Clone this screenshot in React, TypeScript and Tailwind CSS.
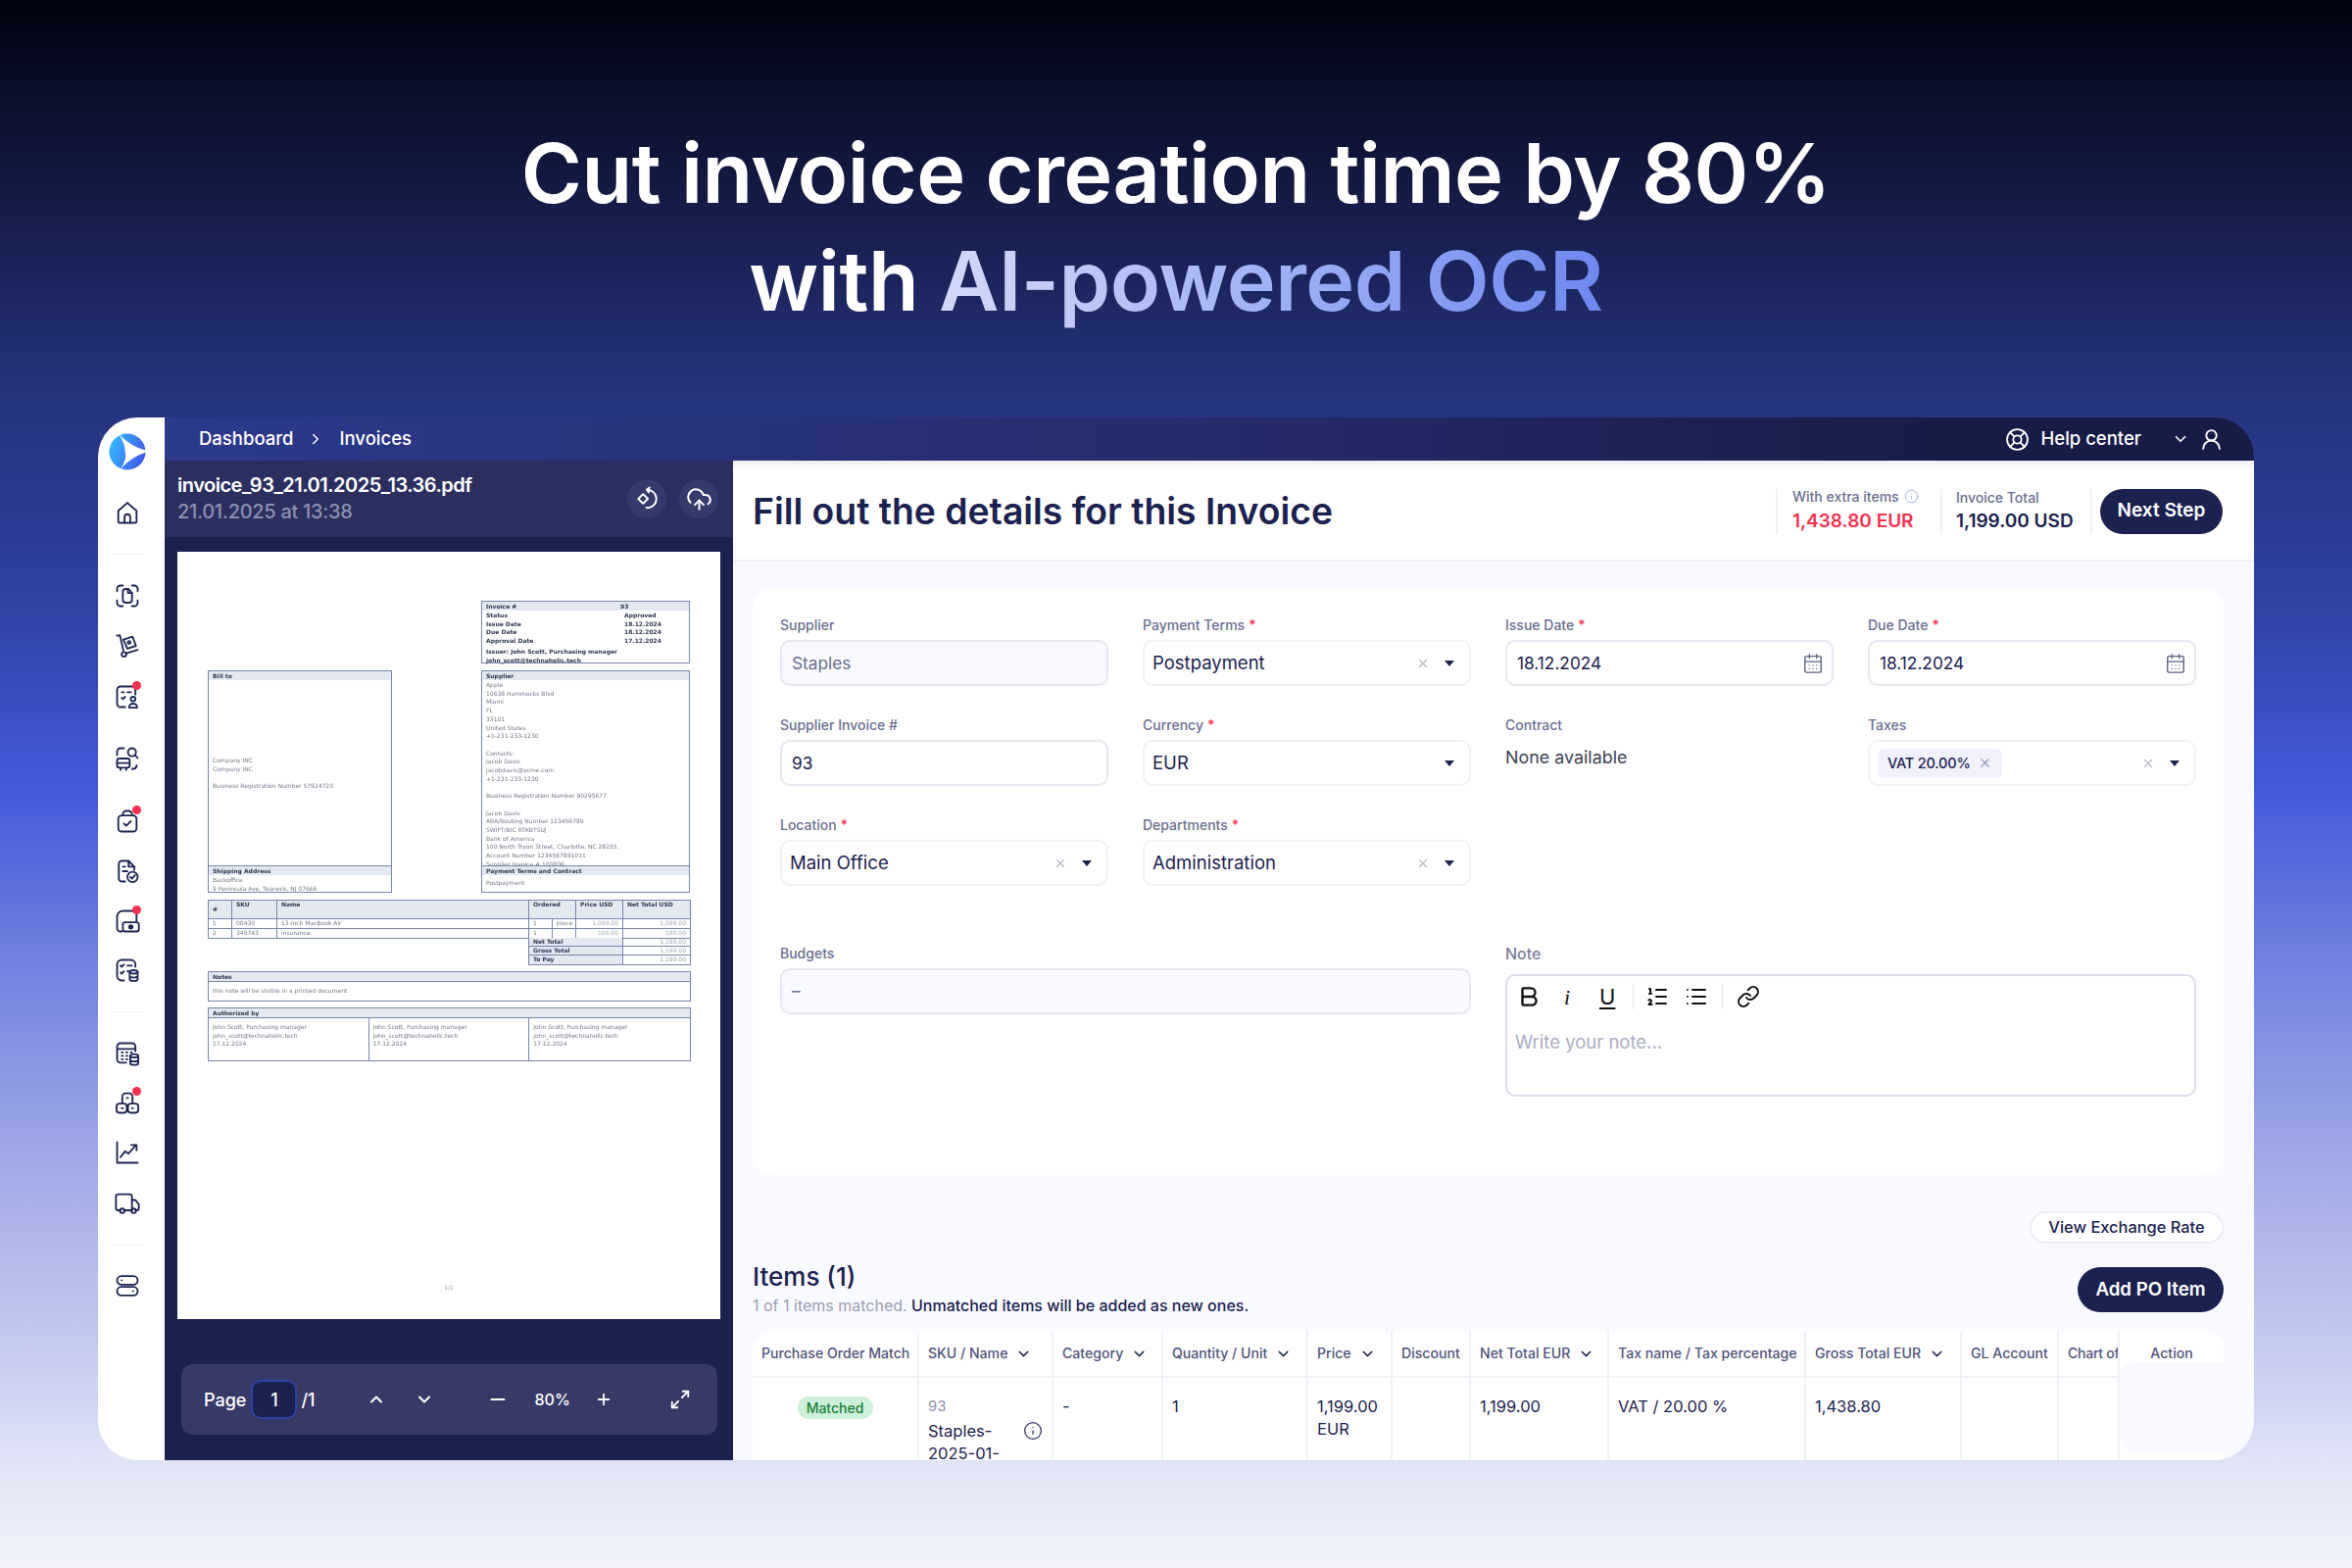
import React from 'react';
import {
  Bold, ChevronDown, ChevronRight, ChevronUp, Info, Link, List, ListOrdered, LifeBuoy, Maximize2,
  Minus, Plus, UserRound, X, CalendarDays, CloudUpload,
} from 'lucide-react';

const sans = 'font-["Inter","Liberation_Sans",sans-serif]';

type IconProps = { children: React.ReactNode; dot?: boolean; className?: string };

// every rail icon is 28px with a fixed stroke, the dot sits over the corner
const RailIcon: React.FC<IconProps> = ({ children, dot, className }) => (
  <div className={`relative w-7 h-7 text-[#1f2654] ${className ?? ''}`}>
    <svg viewBox="0 0 24 24" className="w-7 h-7" fill="none" stroke="currentColor" strokeWidth={1.6} strokeLinecap="round" strokeLinejoin="round">
      {children}
    </svg>
    {dot && <span className="absolute -top-[2px] right-0 w-[9px] h-[9px] rounded-full bg-[#f5314f]" />}
  </div>
);

const Rail = () => (
  <div className="w-[68px] shrink-0 bg-white flex flex-col items-center pr-[8px]">
    <svg viewBox="0 0 40 40" className="w-[38px] h-[38px] mt-4">
      <defs>
        <linearGradient id="logo" x1="0" y1="0.3" x2="1" y2="0.7">
          <stop offset="0" stopColor="#35b8ff" />
          <stop offset="1" stopColor="#4056e4" />
        </linearGradient>
      </defs>
      <circle cx="20" cy="20" r="19.500" fill="url(#logo)" />
      <path d="M11 1.500Q25 15 39.800 18.500L39.800 20.500Q25 25 12.500 38.500Q20 28 17.500 20Q18 12 11 1.500Z" fill="#fff" />
    </svg>
    <RailIcon className="mt-[29px]">
      <path d="M4 10.5 12 3.5l8 7V20a1 1 0 0 1-1 1H5a1 1 0 0 1-1-1z" />
      <path d="M9.5 21v-5a2.5 2.5 0 0 1 5 0v5" />
    </RailIcon>
    <div className="w-8 h-px bg-[#f2f3f9] mt-[28px]" />
    <RailIcon className="mt-[28px]">
      <path d="M8 3H6a3 3 0 0 0-3 3v2M16 3h2a3 3 0 0 1 3 3v2M8 21H6a3 3 0 0 1-3-3v-2M16 21h2a3 3 0 0 0 3-3v-2" />
      <path d="M8 8.5A2.5 2.5 0 0 1 10.500 6H13l3 3.500V15.500a2.500 2.500 0 0 1-2.500 2.500h-3A2.500 2.500 0 0 1 8 15.500z" />
      <path d="M12.500 6v3.500H16" />
    </RailIcon>
    <RailIcon className="mt-[23px]">
      <path d="M3 3h2.500l3 13" />
      <circle cx="9" cy="19.500" r="2" />
      <path d="M11 18.500l10-3" />
      <path d="M8.500 6.500l8-2.500 3 8-7.500 2.500z" />
      <circle cx="13.500" cy="9" r="1.200" />
    </RailIcon>
    <RailIcon dot className="mt-[24px]">
      <path d="M10 21H6a3 3 0 0 1-3-3V6a3 3 0 0 1 3-3h10a3 3 0 0 1 3 3v4" />
      <path d="M7 8h2M12 8h3M7 13l1 1 2-2" />
      <circle cx="17" cy="14" r="2" />
      <path d="M13.500 21.500v-.500a3.500 3 0 0 1 7 0v.500z" />
    </RailIcon>
    <RailIcon className="mt-[35px]">
      <path d="M3 9V6a3 3 0 0 1 3-3h3M20 19v-1M16 21h1a3 3 0 0 0 3-2" />
      <circle cx="16" cy="6.500" r="3.500" />
      <path d="M19 9.500l2 2" />
      <rect x="3" y="12" width="11" height="8" rx="2" />
      <path d="M3 16h11M6 22v-2M11 22v-2" />
    </RailIcon>
    <RailIcon dot className="mt-[36px]">
      <rect x="4" y="7" width="16" height="14" rx="3" />
      <path d="M8 7V6a3 3 0 0 1 3-3h2a3 3 0 0 1 3 3v1M9 14l2 2 4-4" />
    </RailIcon>
    <RailIcon className="mt-[23px]">
      <path d="M10 21H7a2.500 2.500 0 0 1-2.500-2.500V5.500A2.500 2.500 0 0 1 7 3h6l5 5v3" />
      <path d="M13 3v5h5M8 8h2M8 12h4" />
      <circle cx="16.500" cy="17" r="4.500" />
      <path d="M14.500 17l1.500 1.500 2.500-3" />
    </RailIcon>
    <RailIcon dot className="mt-[23px]">
      <path d="M7 21H6a3 3 0 0 1-3-3V8a5 5 0 0 1 5-5h10M20 3v9" />
      <rect x="8" y="13" width="14" height="8" rx="2" />
      <circle cx="15" cy="17" r="1.500" fill="currentColor" />
    </RailIcon>
    <RailIcon className="mt-[22px]">
      <path d="M9 21H7a4 4 0 0 1-4-4V7a4 4 0 0 1 4-4h8a4 4 0 0 1 4 4v2" />
      <path d="M6 8l1 1 2-2M12 8h4M6 14l1 1 2-2M12 13h2" />
      <ellipse cx="17.500" cy="13.500" rx="3.500" ry="1.500" />
      <path d="M14 13.500V20c0 1 1.500 1.500 3.500 1.500s3.500-.5 3.500-1.500v-6.500M14 17c0 1 1.500 1.500 3.500 1.500S21 18 21 17" />
    </RailIcon>
    <div className="w-8 h-px bg-[#f2f3f9] mt-[28px]" />
    <RailIcon className="mt-[28px]">
      <path d="M11 20H6a3 3 0 0 1-3-3V6a3 3 0 0 1 3-3h10a3 3 0 0 1 3 3v4M3 8h16" />
      <path d="M7 11h1M11 11h1M15 11h1M7 14h1M11 14h1M7 17h1M11 17h1" />
      <ellipse cx="18" cy="14" rx="3.500" ry="1.500" />
      <path d="M14.500 14v6.500c0 .8 1.500 1.500 3.500 1.500s3.500-.7 3.500-1.500V14M14.500 17.500c0 .8 1.500 1.500 3.500 1.500s3.500-.7 3.500-1.500" />
    </RailIcon>
    <RailIcon dot className="mt-[22px]">
      <rect x="2.500" y="13" width="9" height="8" rx="2.500" />
      <rect x="12.500" y="13" width="9" height="8" rx="2.500" />
      <path d="M7.500 13V7a3 3 0 0 1 3-3h3a3 3 0 0 1 3 3v6" />
      <path d="M7 17h1M16 17h1M11.500 8h1" />
    </RailIcon>
    <RailIcon className="mt-[23px]">
      <path d="M3 3v18h18" />
      <path d="M6 16l4-5 3 2 6-7" />
      <path d="M15.500 5.500H20v4.500" />
    </RailIcon>
    <RailIcon className="mt-[24px]">
      <path d="M6 18H4a2 2 0 0 1-2-2V6a2 2 0 0 1 2-2h10a2 2 0 0 1 2 2v12H9" />
      <path d="M16 9h3l3 4v3a2 2 0 0 1-2 2h-1M13 18h3" />
      <circle cx="7.500" cy="18.500" r="2" />
      <circle cx="17.500" cy="18.500" r="2" />
    </RailIcon>
    <div className="w-8 h-px bg-[#f2f3f9] mt-[28px]" />
    <RailIcon className="mt-[27px]">
      <rect x="3" y="3.500" width="18" height="7.500" rx="3.750" />
      <rect x="3" y="13" width="18" height="7.500" rx="3.750" />
      <path d="M7 7.200h.01M17 16.700h.01" />
    </RailIcon>
  </div>
);

const Box: React.FC<{ title: string; children?: React.ReactNode; className?: string }> = ({ title, children, className }) => (
  <div className={`border-[1.5px] border-[#7886ab] ${className ?? ''}`}>
    <div className="h-[9px] bg-[#e3e8f1] px-1 leading-[9px] font-bold text-[#2f3850]">{title}</div>
    {children}
  </div>
);

const InvoiceDoc = () => (
  <div className="w-[554px] h-[783px] shrink-0 bg-white mt-[15px] ml-[13px] flex flex-col px-[31px] pt-[50px] font-['DejaVu_Sans',sans-serif] text-[6px] leading-[8.7px] text-[#737989] blur-[0.3px]">
    <div className="flex justify-end">
      <Box title="Invoice #" className="w-[213px] h-[64px] relative">
        <div className="absolute left-[141px] top-0 font-bold text-[#2f3850] leading-[9px]">93</div>
        <div className="px-1 pt-[1px] grid grid-cols-[141px_1fr] font-bold text-[#2f3850]">
          <span>Status</span><span>Approved</span>
          <span>Issue Date</span><span>18.12.2024</span>
          <span>Due Date</span><span>18.12.2024</span>
          <span>Approval Date</span><span>17.12.2024</span>
        </div>
        <div className="px-1 pt-[2px] font-bold text-[#2f3850]">Issuer: John Scott, Purchasing manager<br />john_scott@technaholic.tech</div>
      </Box>
    </div>
    <div className="flex justify-between mt-[7px]">
      <div className="w-[188px] h-[227px] flex flex-col">
        <Box title="Bill to" className="h-[200px]">
          <div className="px-1 pt-[78px]">Company INC<br />Company INC<br /><br />Business Registration Number 57924720</div>
        </Box>
        <Box title="Shipping Address" className="h-[27px] border-t-0">
          <div className="px-1 pt-[1px]">Backoffice<br />9 Peninsula Ave, Teaneck, NJ 07666</div>
        </Box>
      </div>
      <div className="w-[213px] h-[227px] flex flex-col">
        <Box title="Supplier" className="h-[200px] overflow-hidden">
          <div className="px-1 pt-[1px]">
            Apple<br />10638 Hammocks Blvd<br />Miami<br />FL<br />33101<br />United States<br />+1-231-233-1230<br /><br />
            Contacts:<br />Jacob Davis<br />jacobdavis@acme.com<br />+1-231-233-1230<br /><br />
            Business Registration Number 90295677<br /><br />
            Jacob Davis<br />ABA/Routing Number 123456789<br />SWIFT/BIC RTKBTSUJ<br />Bank of America<br />
            100 North Tryon Street, Charlotte, NC 28255.<br />Account Number 1234567891011<br />Supplier Invoice # 100806
          </div>
        </Box>
        <Box title="Payment Terms and Contract" className="h-[27px] border-t-0">
          <div className="px-1 pt-[4px]">Postpayment</div>
        </Box>
      </div>
    </div>
    <div className="mt-[7px] border-[1.5px] border-[#7886ab] w-[493px]">
      <div className="grid grid-cols-[24px_46px_257px_48px_48px_1fr] h-[19px] bg-[#e3e8f1] font-bold text-[#2f3850] divide-x-[1.5px] divide-[#7886ab] border-b-[1.5px] border-[#7886ab]">
        <span className="px-1 pt-[5px]">#</span><span className="px-1">SKU</span><span className="px-1">Name</span>
        <span className="px-1">Ordered</span><span className="px-1">Price USD</span><span className="px-1 leading-[8.5px]">Net Total USD</span>
      </div>
      {[['1', '00430', '13-inch MacBook Air', '1,099.00', '1,099.00'], ['2', '345743', 'insurance', '100.00', '100.00']].map(r => (
        <div key={r[0]} className="grid grid-cols-[24px_46px_257px_24px_24px_48px_1fr] h-[9.500px] leading-[8.500px] divide-x-[1.5px] divide-[#7886ab] border-b-[1.5px] last:border-b-0 border-[#7886ab]">
          <span className="px-1">{r[0]}</span><span className="px-1">{r[1]}</span><span className="px-1">{r[2]}</span>
          <span className="px-1">1</span><span className="pl-1 overflow-hidden">{r[0] === '1' ? 'piece' : ''}</span>
          <span className="px-1 text-right text-[#a0a6b4]">{r[3]}</span><span className="px-1 text-right text-[#a0a6b4]">{r[4]}</span>
        </div>
      ))}
    </div>
    <div className="ml-[327px] w-[166px] -mt-[1px] border-x-[1.5px] border-b-[1.5px] border-[#7886ab]">
      {['Net Total', 'Gross Total', 'To Pay'].map(t => (
        <div key={t} className="grid grid-cols-[96px_1fr] h-[9px] leading-[8px] border-b-[1.5px] last:border-b-0 border-[#7886ab] divide-x-[1.5px] divide-[#7886ab]">
          <span className="px-1 font-bold text-[#2f3850] bg-[#e3e8f1]">{t}</span>
          <span className="px-1 text-right text-[#a0a6b4]">1,199.00</span>
        </div>
      ))}
    </div>
    <Box title="Notes" className="h-[31px] mt-[6px] w-[493px]">
      <div className="px-1 pt-[5px] border-t-[1.5px] border-[#7886ab]">this note will be visible in a printed document</div>
    </Box>
    <Box title="Authorized by" className="h-[55px] mt-[6px] w-[493px]">
      <div className="grid grid-cols-3 h-[44px] border-t-[1.5px] border-[#7886ab] divide-x-[1.5px] divide-[#7886ab]">
        {[0, 1, 2].map(i => (
          <div key={i} className="px-1 pt-[5px]">John Scott, Purchasing manager<br />john_scott@technaholic.tech<br />17.12.2024</div>
        ))}
      </div>
    </Box>
    <div className="mt-auto mb-[27px] text-center text-[#9aa0ad]">1/1</div>
  </div>
);

const PdfPane = () => (
  <div className="w-[580px] shrink-0 bg-[#1b2250] flex flex-col">
    <div className="h-[78px] shrink-0 bg-[#2a2f60] flex items-center pl-[13px] pr-[15px]">
      <div className="flex-1">
        <div className="text-[20px] leading-[27px] font-semibold text-white tracking-[-0.5px]">invoice_93_21.01.2025_13.36.pdf</div>
        <div className="text-[20px] leading-[27px] font-medium text-[#8c90b2] tracking-[-0.3px]">21.01.2025 at 13:38</div>
      </div>
      <div className="w-10 h-10 rounded-full bg-[#343a6b] flex items-center justify-center text-white">
        <svg viewBox="0 0 24 24" className="w-[26px] h-[26px]" fill="none" stroke="currentColor" strokeWidth={1.8} strokeLinecap="round" strokeLinejoin="round">
          <path d="M8.500 7.500l4.500 4.500-4.500 4.500L4 12z" />
          <path d="M12 3.500a8.500 8.500 0 0 1 1 17l-1.500-.300M14.500 1.500L12 3.500l2 2.500" />
        </svg>
      </div>
      <div className="w-10 h-10 rounded-full bg-[#343a6b] flex items-center justify-center text-white ml-[13px]">
        <CloudUpload size={27} strokeWidth={1.8} />
      </div>
    </div>
    <InvoiceDoc />
    <div className="mt-[46px] ml-[17px] w-[547px] h-[72px] rounded-xl bg-[#373a66] flex items-center text-white font-medium text-[18px]">
      <span className="ml-[23px]">Page</span>
      <span className="ml-[5px] w-[47px] h-10 rounded-[10px] bg-[#1b2250] border-2 border-[#2f43a0] flex items-center justify-center">1</span>
      <span className="ml-1">/1</span>
      <ChevronUp size={20} strokeWidth={2.4} className="ml-[52px]" />
      <ChevronDown size={20} strokeWidth={2.4} className="ml-[29px]" />
      <Minus size={22} strokeWidth={2.4} className="ml-[54px]" />
      <span className="ml-[27px] text-[16px] w-[35px]">80%</span>
      <Plus size={18} strokeWidth={2.4} className="ml-[26px]" />
      <Maximize2 size={22} strokeWidth={2} className="ml-[58px]" />
    </div>
  </div>
);

const Req = () => <span className="text-[#f5314f] ml-1">*</span>;

const Label: React.FC<{ text: string; req?: boolean }> = ({ text, req }) => (
  <div className="h-[20px] leading-[20px] text-[14px] font-medium text-[#6a6f8e] mb-[5px]">{text}{req && <Req />}</div>
);

const Field: React.FC<{ label: string; req?: boolean; children: React.ReactNode; className?: string }> = ({ label, req, children, className }) => (
  <div className={className}>
    <Label text={label} req={req} />
    {children}
  </div>
);

const Input: React.FC<{ value: string; muted?: boolean; icon?: boolean }> = ({ value, muted, icon }) => (
  <div className={`h-[47px] rounded-[10px] border-2 border-[#e6e7f0] flex items-center pl-[10px] pr-[8px] text-[17.300px] ${muted ? 'bg-[#f9faff] text-[#6a6f8e]' : 'bg-white text-[#1b2250]'}`}>
    <span className="flex-1">{value}</span>
    {icon && <CalendarDays size={22} strokeWidth={1.5} className="text-[#5c617f]" />}
  </div>
);

const Caret = () => <span className="ml-[15px] w-0 h-0 border-x-[5px] border-x-transparent border-t-[6px] border-t-[#1b2250]" />;

const Select: React.FC<{ value?: string; clear?: boolean; children?: React.ReactNode }> = ({ value, clear = true, children }) => (
  <div className="h-[47px] rounded-[10px] border-2 border-[#f1f2f7] bg-white flex items-center pl-[8px] pr-[15px] text-[18.500px] text-[#1b2250]">
    <span className="flex-1 flex">{value}{children}</span>
    {clear && <X size={14} className="text-[#b4b6c2]" />}
    <Caret />
  </div>
);

const FormCard = () => (
  <div className="mx-[20px] mt-[27px] h-[599px] shrink-0 rounded-[20px] bg-white pl-[28px] pt-[28px] pr-[28px] w-[1501px]">
    <div className="grid grid-cols-[335px_335px_335px_335px] gap-x-[35px] gap-y-[30px]">
      <Field label="Supplier"><Input value="Staples" muted /></Field>
      <Field label="Payment Terms" req><Select value="Postpayment" /></Field>
      <Field label="Issue Date" req><Input value="18.12.2024" icon /></Field>
      <Field label="Due Date" req><Input value="18.12.2024" icon /></Field>

      <Field label="Supplier Invoice #"><Input value="93" /></Field>
      <Field label="Currency" req><Select value="EUR" clear={false} /></Field>
      <Field label="Contract"><div className="text-[17.900px] leading-[24px] text-[#3f4356] mt-[11px]">None available</div></Field>
      <Field label="Taxes">
        <Select>
          <span className="h-[30px] rounded-md bg-[#f0f1fb] flex items-center px-[10px] text-[14.500px] font-medium tracking-[-0.2px]">
            VAT 20.00%<X size={15} className="ml-[7px] text-[#9a9eb8]" />
          </span>
        </Select>
      </Field>

      <Field label="Location" req><Select value="Main Office" /></Field>
      <Field label="Departments" req><Select value="Administration" /></Field>
    </div>
    <div className="grid grid-cols-[705px_705px] gap-x-[35px] mt-[59px]">
      <Field label="Budgets">
        <div className="h-[47px] rounded-[10px] border-2 border-[#e6e7f0] bg-[#f9faff] flex items-center pl-[10px] text-[17px] text-[#6a6f8e]">–</div>
      </Field>
      <div>
        <div className="h-[20px] leading-[20px] text-[16px] font-medium text-[#7d8099] mb-[11px]">Note</div>
        <div className="h-[125px] rounded-[10px] border-2 border-[#dcdde8] bg-white">
          <div className="flex items-center h-[40px] mt-[1px] pl-[9px] text-[#111]">
            <Bold size={26} strokeWidth={2.2} />
            <span className="ml-[23px] w-[8px] text-[22px] italic font-['Liberation_Serif',serif]">i</span>
            <span className="ml-[28px] text-[22px] underline underline-offset-[3px] leading-none">U</span>
            <span className="ml-[18px] w-px h-[26px] bg-[#e5e6ee]" />
            <ListOrdered size={24} strokeWidth={2} className="ml-[12px]" />
            <List size={24} strokeWidth={2} className="ml-[16px]" />
            <span className="ml-[14px] w-px h-[26px] bg-[#e5e6ee]" />
            <Link size={24} strokeWidth={2} className="ml-[14px]" />
          </div>
          <div className="pl-[8px] mt-[13px] text-[18.500px] text-[#a9acc0]">Write your note...</div>
        </div>
      </div>
    </div>
  </div>
);

const Head: React.FC<{ text: string; arrow?: boolean; className?: string }> = ({ text, arrow, className }) => (
  <div className={`pl-[9px] flex items-center gap-2 whitespace-nowrap overflow-hidden border-r-2 border-[#f1f2f7] ${className ?? ''}`}>
    <span>{text}</span>{arrow && <ChevronDown size={17} strokeWidth={2.2} className="text-[#2c325c] shrink-0" />}
  </div>
);

const Cell: React.FC<{ children?: React.ReactNode }> = ({ children }) => (
  <div className="pl-[9px] pt-[18px] leading-[23px] border-r-2 border-[#f1f2f7] text-[#1b2250]">{children}</div>
);

const ItemsTable = () => (
  <div className="mx-[20px] w-[1501px] flex-1 min-h-0 rounded-t-[20px] bg-white overflow-hidden mt-[15px] flex flex-col text-[16.500px]">
    <div className="grid grid-cols-[170px_137px_112px_148px_86px_80px_141px_201px_159px_99px_62px_106px] h-[48px] shrink-0 border-b-2 border-[#f1f2f7] text-[14.100px] font-medium text-[#50557a]">
      <Head text="Purchase Order Match" />
      <Head text="SKU / Name" arrow />
      <Head text="Category" arrow />
      <Head text="Quantity / Unit" arrow />
      <Head text="Price" arrow />
      <Head text="Discount" />
      <Head text="Net Total EUR" arrow />
      <Head text="Tax name / Tax percentage" />
      <Head text="Gross Total EUR" arrow />
      <Head text="GL Account" />
      <Head text="Chart of" className="tracking-[-0.3px]" />
      <div className="flex items-center justify-center">Action</div>
    </div>
    <div className="grid grid-cols-[170px_137px_112px_148px_86px_80px_141px_201px_159px_99px_62px_106px] flex-1 min-h-0">
      <div className="flex justify-center pt-[19px] border-r-2 border-[#f1f2f7]">
        <span className="h-[23px] w-[77px] rounded-full bg-[#cff0d8] text-[#17803d] text-[14px] font-medium flex items-center justify-center">Matched</span>
      </div>
      <Cell>
        <div className="text-[#8f92a8] text-[15px] -mt-[1px] leading-[24px]">93</div>
        <div className="flex justify-between pr-[9px] mt-[2px]">
          <span>Staples-<br />2025-01-</span>
          <Info size={20} strokeWidth={1.5} className="text-[#2c325c] mt-[1px]" />
        </div>
      </Cell>
      <Cell>-</Cell>
      <Cell>1</Cell>
      <Cell>1,199.00<br />EUR</Cell>
      <Cell />
      <Cell>1,199.00</Cell>
      <Cell>VAT / 20.00 %</Cell>
      <Cell>1,438.80</Cell>
      <Cell />
      <Cell />
      <div className="-mt-[16px] h-[92px] rounded-l-[14px] bg-[#f9faff]" />
    </div>
  </div>
);

const MainPane = () => (
  <div className="w-[1552px] shrink-0 bg-[#f9faff] flex flex-col min-h-0">
    <div className="h-[103px] shrink-0 bg-white border-b-2 border-[#eff0f6] shadow-[inset_0_10px_10px_-8px_rgba(27,34,80,0.12)] flex items-center pl-[20px] pr-[32px] pt-[2px]">
      <h1 className="flex-1 text-[37.300px] font-semibold text-[#1b2250]">Fill out the details for this Invoice</h1>
      <div className="w-[168px] h-[46px] border-l-2 border-[#eff0f6] pl-[15px]">
        <div className="flex items-center gap-[5px] -mt-[2px] h-[20px] text-[14px] font-medium text-[#6a6f8e]">With extra items <Info size={15} strokeWidth={1.5} className="text-[#a4b0ee]" /></div>
        <div className="text-[19px] mt-[1px] leading-[27px] font-semibold text-[#f5314f]">1,438.80 EUR</div>
      </div>
      <div className="w-[153px] h-[46px] border-l-2 border-[#eff0f6] pl-[14px]">
        <div className="-mt-[2px] h-[20px] text-[14px] font-medium text-[#6a6f8e]">Invoice Total</div>
        <div className="text-[19px] mt-[1px] leading-[27px] font-semibold text-[#1b2250]">1,199.00 USD</div>
      </div>
      <div className="w-[135px] h-[46px] border-l-2 border-[#eff0f6] pl-[8px]">
        <div className="h-[46px] w-[125px] rounded-full bg-[#1b2250] text-white font-semibold text-[19px] flex items-center justify-center">Next Step</div>
      </div>
    </div>
    <FormCard />
    <div className="flex justify-end mt-[37px] mr-[31px] shrink-0">
      <div className="h-[33px] w-[198px] rounded-full border-2 border-[#eceef5] bg-white text-[16.400px] font-medium text-[#1b2250] flex items-center justify-center">View Exchange Rate</div>
    </div>
    <div className="flex items-start justify-between mx-[20px] w-[1501px] mt-[19px] shrink-0">
      <div>
        <div className="text-[26px] leading-[30px] font-medium text-[#1b2250]">Items (1)</div>
        <div className="text-[16px] leading-[22px] mt-[3px] font-medium text-[#1b2250]">
          <span className="text-[#9a9db2] font-normal">1 of 1 items matched.</span> Unmatched items will be added as new ones.
        </div>
      </div>
      <div className="mt-[5px] h-[46px] w-[149px] rounded-full bg-[#1b2250] text-white font-semibold text-[18.700px] flex items-center justify-center">Add PO Item</div>
    </div>
    <ItemsTable />
  </div>
);

const TopBar = () => (
  <div className="h-[44px] shrink-0 bg-[linear-gradient(90deg,#2c3a8c_0%,#252c6b_50%,#171c47_85%,#171c47_100%)] flex items-center text-white font-medium text-[18.500px] pl-[35px] pr-[31px]">
    <span>Dashboard</span>
    <ChevronRight size={18} strokeWidth={2} className="ml-[14px]" />
    <span className="ml-[15px]">Invoices</span>
    <LifeBuoy size={25} strokeWidth={1.8} className="ml-auto" />
    <span className="ml-[12px]">Help center</span>
    <ChevronDown size={18} strokeWidth={2.2} className="ml-[31px]" />
    <UserRound size={25} strokeWidth={1.8} className="ml-[10px]" />
  </div>
);

export default function App() {
  return (
    <div className={`${sans} w-[2400px] h-[1600px] overflow-hidden flex flex-col bg-[linear-gradient(180deg,#01030f_0%,#141b45_12.500%,#25337c_25%,#2f409f_37.500%,#4359da_50%,#7784e0_62.500%,#a3ace6_75%,#c8cdf0_87%,#e3e6f6_94%,#f1f2fa_100%)]`}>
      <div className="h-[426px] shrink-0 pt-[121px] text-center text-[84.500px] leading-[110px] font-semibold text-white tracking-[-0.5px]">
        <div>Cut invoice creation time by 80%</div>
        <div>with <span className="bg-[linear-gradient(90deg,#d3d9f8_0%,#6f88f0_100%)] bg-clip-text text-transparent">AI-powered OCR</span></div>
      </div>
      <div className="mx-[100px] h-[1064px] w-[2200px] rounded-[40px] overflow-hidden flex shrink-0">
        <Rail />
        <div className="flex-1 min-w-0 flex flex-col">
          <TopBar />
          <div className="flex-1 min-h-0 flex">
            <PdfPane />
            <MainPane />
          </div>
        </div>
      </div>
    </div>
  );
}
